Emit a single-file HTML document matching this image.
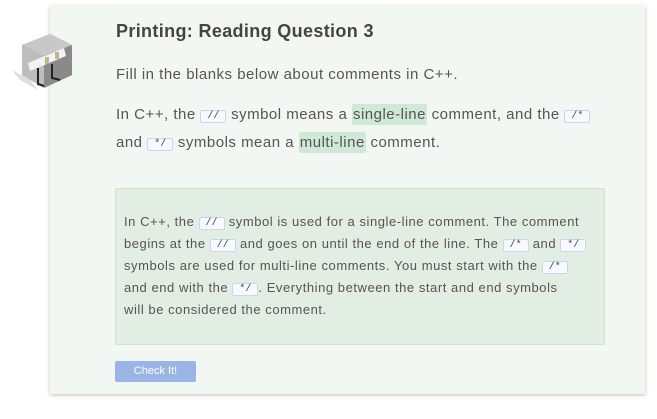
<!DOCTYPE html>
<html><head><meta charset="utf-8"><style>
body{margin:0;width:657px;height:419px;background:#fff;font-family:"Liberation Sans",sans-serif;position:relative;overflow:hidden}
.card{position:absolute;left:50px;top:6px;width:595px;height:388px;background:#f2f7f3;box-shadow:0 1px 4px rgba(0,0,0,.25)}
.t{position:absolute;left:116px;white-space:nowrap;color:#555}
code{font-family:"Liberation Mono",monospace;font-size:10px;background:#f7f9ff;border:1px solid #c9d6f0;border-radius:2px;padding:0 6px;color:#444;position:relative;top:-1px;letter-spacing:0}
.hl{background:#cfe9d6;padding:2px 1px;border-radius:2px}
.box{position:absolute;left:115px;top:188px;width:488px;height:155px;background:#e2ede3;border:1px solid #d3dfd4;border-radius:2px}
.b{font-size:13px;left:124px;color:#555;letter-spacing:.55px}
.p{font-size:15px;letter-spacing:.5px}
.btn{position:absolute;left:115px;top:361px;width:81px;height:21px;background:#98b5e6;border-radius:2px;color:#fff;font-size:11px;text-align:center;line-height:21px}
</style></head><body>
<div class="card"></div>
<svg style="position:absolute;left:8px;top:30px" width="68" height="64" viewBox="0 0 68 64">
<polygon points="4,40 22,50 30,60 12,50" fill="#ddd"/>
<polygon points="14,15 42,4 64,15 64,45 36,58 14,45" fill="#a9a9a9"/>
<polygon points="14,15 42,4 64,15 36,26" fill="#c8c8c8"/>
<polygon points="14,15 36,26 36,58 14,45" fill="#bdbdbd"/>
<polygon points="36,26 64,15 64,45 36,58" fill="#8a8a8a"/>
<polygon points="20,33 56,18 58,26 22,41" fill="#f3f3f3"/>
<rect x="37" y="27" width="4" height="7" fill="#b7b98a"/>
<rect x="47" y="22" width="4" height="7" fill="#b7b98a"/>
<path d="M30 38 V54 L36 56 M44 34 V48 L52 50" stroke="#222" stroke-width="2" fill="none"/>
</svg>
<div class="t" style="top:21px;font-size:18px;font-weight:bold;color:#444;letter-spacing:.35px">Printing: Reading Question 3</div>
<div class="t p" style="top:66px">Fill in the blanks below about comments in C++.</div>
<div class="t p" style="top:106px">In C++, the <code>//</code> symbol means a <span class="hl">single-line</span> comment, and the <code>/*</code></div>
<div class="t p" style="top:134px">and <code>*/</code> symbols mean a <span class="hl">multi-line</span> comment.</div>
<div class="box"></div>
<div class="t b" style="top:214px">In C++, the <code>//</code> symbol is used for a single-line comment. The comment</div>
<div class="t b" style="top:236px">begins at the <code>//</code> and goes on until the end of the line. The <code>/*</code> and <code>*/</code></div>
<div class="t b" style="top:258px">symbols are used for multi-line comments. You must start with the <code>/*</code></div>
<div class="t b" style="top:280px">and end with the <code>*/</code>. Everything between the start and end symbols</div>
<div class="t b" style="top:302px">will be considered the comment.</div>
<div class="btn">Check It!</div>
</body></html>
